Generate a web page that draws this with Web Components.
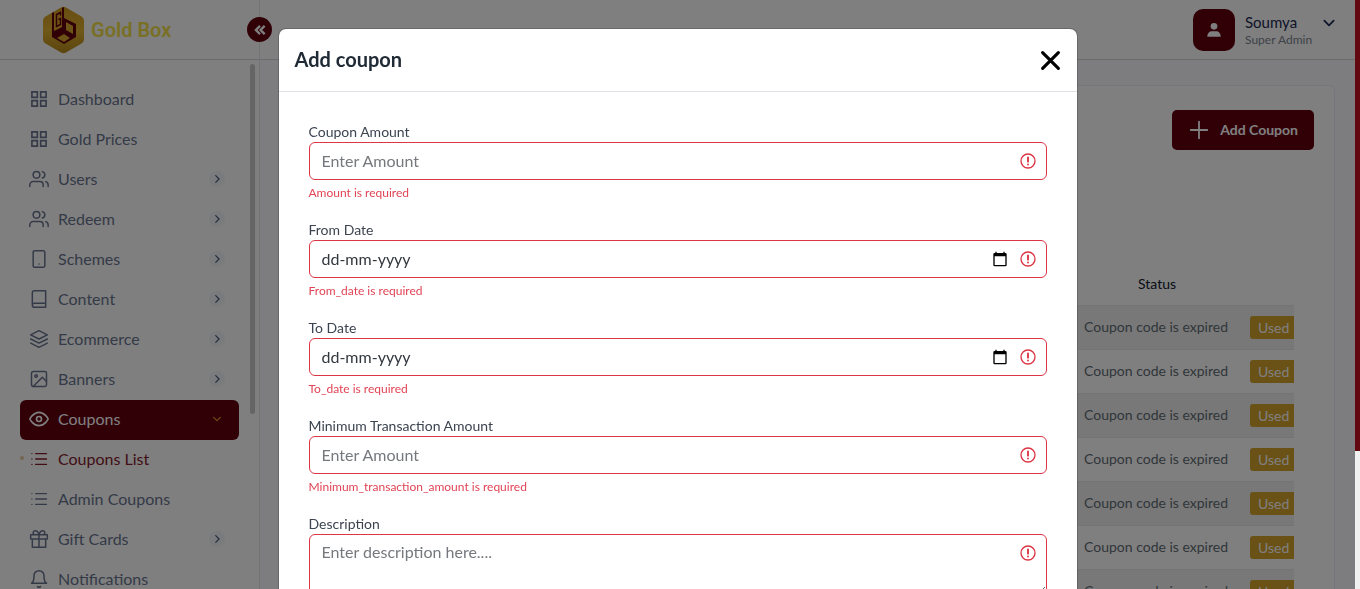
<!DOCTYPE html>
<html lang="en">
<head>
<meta charset="utf-8">
<title>Gold Box</title>
<style>
html, body { margin: 0; height: 100%; overflow: hidden; }
body { font-family: Lato, "Liberation Sans", sans-serif; background: #fafaff; color: #212b36; }
</style>
</head>
<body>
<gb-app>
  <gb-sidebar slot="sidebar">
    <gb-nav-item icon="grid">Dashboard</gb-nav-item>
    <gb-nav-item icon="grid">Gold Prices</gb-nav-item>
    <gb-nav-item icon="users" more>Users</gb-nav-item>
    <gb-nav-item icon="users" more>Redeem</gb-nav-item>
    <gb-nav-item icon="tablet" more>Schemes</gb-nav-item>
    <gb-nav-item icon="book" more>Content</gb-nav-item>
    <gb-nav-item icon="layers" more>Ecommerce</gb-nav-item>
    <gb-nav-item icon="image" more>Banners</gb-nav-item>
    <gb-nav-item icon="eye" more active>Coupons</gb-nav-item>
    <gb-nav-item icon="list" current>Coupons List</gb-nav-item>
    <gb-nav-item icon="list">Admin Coupons</gb-nav-item>
    <gb-nav-item icon="gift" more>Gift Cards</gb-nav-item>
    <gb-nav-item icon="bell">Notifications</gb-nav-item>
  </gb-sidebar>
  <gb-topbar slot="topbar" name="Soumya" role-name="Super Admin"></gb-topbar>
  <gb-coupons></gb-coupons>
</gb-app>
<gb-modal heading="Add coupon">
  <gb-field label="Coupon Amount" hint="Enter Amount" error="Amount is required"></gb-field>
  <gb-field kind="date" label="From Date" hint="dd-mm-yyyy" error="From_date is required"></gb-field>
  <gb-field kind="date" label="To Date" hint="dd-mm-yyyy" error="To_date is required"></gb-field>
  <gb-field label="Minimum Transaction Amount" hint="Enter Amount" error="Minimum_transaction_amount is required"></gb-field>
  <gb-field kind="area" label="Description" hint="Enter description here...."></gb-field>
</gb-modal>

<script>
const icon = (name, size) => `<svg viewBox="0 0 24 24" width="${size}" height="${size}" fill="none" stroke="currentColor" stroke-width="2" stroke-linecap="round" stroke-linejoin="round" aria-hidden="true">${ICONS[name]}</svg>`;

const ICONS = {
  grid: '<path stroke-linejoin="miter" d="M3.500 3.500h6.500v6.500H3.500zM14 3.500h6.500v6.500H14zM14 14h6.500v6.500H14zM3.500 14h6.500v6.500H3.500z"/>',
  users: '<g stroke-width="1.8"><path d="M17 21v-2a4 4 0 0 0-4-4H5a4 4 0 0 0-4 4v2"/><circle cx="9" cy="7" r="4"/><path d="M23 21v-2a4 4 0 0 0-3-3.87M16 3.13a4 4 0 0 1 0 7.75"/></g>',
  tablet: '<g stroke-width="1.8"><rect x="5" y="2" width="14" height="20" rx="2"/><path d="M12 18h.01"/></g>',
  book: '<g stroke-width="1.8"><path d="M4 19.500A2.500 2.500 0 0 1 6.500 17H20M6.500 2H20v20H6.500A2.500 2.500 0 0 1 4 19.500v-15A2.500 2.500 0 0 1 6.500 2z"/></g>',
  layers: '<g stroke-width="1.8"><path d="M12 2 2 7l10 5 10-5-10-5zM2 17l10 5 10-5M2 12l10 5 10-5"/></g>',
  image: '<g stroke-width="1.8"><rect x="3" y="3" width="18" height="18" rx="2"/><circle cx="8.500" cy="8.500" r="1.500"/><path d="m21 15-5-5L5 21"/></g>',
  eye: '<path d="M1 12s4-8 11-8 11 8 11 8-4 8-11 8-11-8-11-8z"/><circle cx="12" cy="12" r="3"/>',
  list: '<path d="M8 5.500h13M8 12h13M8 18.500h13M3.500 5.500h.01M3.500 12h.01M3.500 18.500h.01" stroke-width="1.600"/>',
  gift: '<g stroke-width="1.8"><path d="M20 12v10H4V12M2 7h20v5H2zM12 22V7M12 7H7.500a2.500 2.500 0 0 1 0-5C11 2 12 7 12 7zM12 7h4.500a2.500 2.500 0 0 0 0-5C13 2 12 7 12 7z"/></g>',
  bell: '<g stroke-width="1.8"><path d="M18 8A6 6 0 0 0 6 8c0 7-3 9-3 9h18s-3-2-3-9M13.730 21a2 2 0 0 1-3.460 0"/></g>',
  right: '<path d="m9 4 8 8-8 8" stroke-width="3"/>',
  down: '<path d="m4 8 8 8 8-8" stroke-width="3"/>',
  collapse: '<path d="m12 5-7 7 7 7M20 5l-7 7 7 7" stroke-width="4" stroke-linecap="butt" stroke-linejoin="miter"/>',
  person: '<g fill="currentColor" stroke="none"><circle cx="12" cy="6.500" r="5"/><path d="M2 22c0-5 3-8 7-8h6c4 0 7 3 7 8z"/></g>',
  plus: '<path d="M12 3v18M3 12h18"/>',
  close: '<path d="M3 3l18 18M21 3 3 21" stroke-width="3.600"/>',
  alert: '<circle cx="12" cy="12" r="10.500"/><path d="M12 6.500v6.500M12 17v.3" stroke-width="2.800"/>',
  calendar: '<path fill="currentColor" stroke="none" d="M20 3h-1V1h-2v2H7V1H5v2H4a2 2 0 0 0-2 2v16a2 2 0 0 0 2 2h16a2 2 0 0 0 2-2V5a2 2 0 0 0-2-2zm0 18H4V8h16z"/>'
};

class Base extends HTMLElement {
  connectedCallback() {
    if (this.shadowRoot) return;
    const t = document.createElement('template');
    t.innerHTML = `<style>:host,*{box-sizing:border-box}svg{display:block;flex:none}button{font:inherit;border:0;cursor:pointer}${this.css()}</style>${this.html()}`;
    this.attachShadow({ mode: 'open' }).append(t.content.cloneNode(true));
  }
  at(n) { return this.getAttribute(n) || ''; }
}

customElements.define('gb-app', class extends Base {
  css() { return `
    :host{display:grid;grid-template-columns:260px 1fr;height:100vh;overflow:hidden;padding-right:5px}
    .main{display:flex;flex-direction:column;min-width:0;min-height:0}`; }
  html() { return `<slot name="sidebar"></slot><div class="main"><slot name="topbar"></slot><slot></slot></div>`; }
});

customElements.define('gb-sidebar', class extends Base {
  css() { return `
    :host{display:flex;flex-direction:column;position:relative;min-height:0;background:#fff;border-right:1px solid #e4e6ea}
    .brand{display:flex;align-items:center;gap:7px;flex:none;height:60px;padding-left:43px;border-bottom:1px solid #d4d6da;
      font:600 20px/24px Roboto,sans-serif;color:#f2e04a;text-decoration:none}
    .toggle{position:absolute;top:17px;right:-13px;width:25px;height:25px;padding:0;border-radius:50%;background:#63000f;color:#fff;
      display:grid;place-items:center}
    .body{display:flex;align-items:flex-start;flex:1;min-height:0;overflow:hidden;padding:4px 4px 0 20px}
    nav{flex:1;padding:16px 11px 0 0}
    .thumb{width:5px;height:350px;border-radius:3px;background:#cacaca}`; }
  html() { return `
    <a class="brand" href="#">
      <svg viewBox="0 0 41 48" width="41" height="48" aria-hidden="true">
        <defs><linearGradient id="g" x2="0" y2="1"><stop stop-color="#d09a20"/><stop offset=".5" stop-color="#e0b030"/><stop offset="1" stop-color="#b88a1c"/></linearGradient></defs>
        <path fill="url(#g)" d="M18 1.500q2.500-1.500 5 0l15.500 9q2.500 1.500 2.500 4v19q0 2.500-2.500 4l-15.500 9q-2.500 1.500-5 0l-15.500-9Q0 36 0 33.500v-19q0-2.500 2.500-4z"/>
        <path fill="#63000f" d="M9 7l2-1v19l8-4V2l2-1v11l12 6v13l-12 7-12-7z"/>
        <path fill="#d8a82c" d="m23 16 7 4v8l-7-4zM21 28l6 4-6 4-7-4z"/>
        <path fill="none" stroke="#63000f" stroke-width="1.500" d="M17.500 9.500V6.500l-4 2v12l4-2v-6l-2 1"/>
      </svg>
      <span>Gold Box</span>
    </a>
    <button class="toggle" aria-label="Collapse menu">${icon('collapse', 14)}</button>
    <div class="body"><nav><slot></slot></nav><div class="thumb"></div></div>`; }
});

customElements.define('gb-nav-item', class extends Base {
  css() { return `
    :host{display:block}
    a{position:relative;display:flex;align-items:center;gap:9px;height:40px;padding:0 14px 2px 9px;border-radius:6px;
      font-size:16px;line-height:24px;color:#69758f;text-decoration:none}
    .label{flex:1}
    .more{display:grid;place-items:center;width:16px;height:16px;border-radius:50%;background:#f5f7fa;color:#4c5a78}
    :host([active]) a{background:#63000f;color:#fff}
    :host([active]) .more{background:none;color:#d6942c}
    :host([current]) a{color:#841c2c}
    :host([current]) a::before{content:"";position:absolute;left:0;top:16px;width:4px;height:4px;border-radius:50%;background:#ecc8a4}`; }
  html() {
    const more = this.hasAttribute('more') ? `<span class="more">${icon(this.hasAttribute('active') ? 'down' : 'right', 10)}</span>` : '';
    return `<a href="#">${icon(this.at('icon'), 20)}<span class="label"><slot></slot></span>${more}</a>`;
  }
});

customElements.define('gb-topbar', class extends Base {
  css() { return `
    :host{display:flex;justify-content:flex-end;flex:none;height:60px;padding:0 19px;background:#fff;border-bottom:1px solid #d4d6da}
    button{display:flex;align-items:center;padding:0;background:none;text-align:left}
    .avatar{display:grid;place-items:center;width:42px;height:42px;border-radius:10px;background:#63000f;color:#fff}
    .who{display:flex;flex-direction:column;width:71px;margin:0 6px 0 10px;white-space:nowrap}
    b{font-weight:normal;font-size:15px;line-height:20px;color:#1c2a55}
    small{font-size:12px;line-height:16px;color:#7b8590}
    .caret{align-self:flex-start;padding-top:16px;color:#1c2a55}`; }
  html() { return `<button>
    <span class="avatar">${icon('person', 16)}</span>
    <span class="who"><b>${this.at('name')}</b><small>${this.at('role-name')}</small></span>
    <span class="caret">${icon('down', 14)}</span></button>`; }
});

customElements.define('gb-coupons', class extends Base {
  css() { return `
    :host{display:block;flex:1;min-height:0;overflow:hidden;padding:25px 20px 0}
    .card{background:#fff;border:1px solid #eceef4;border-radius:6px;padding:24px 20px 40px}
    .bar{display:flex;justify-content:flex-end}
    .add{display:flex;align-items:center;gap:10px;height:40px;padding:0 16px;border-radius:5px;background:#63000f;color:#fff;font-weight:bold;font-size:14px;line-height:20px}
    .scroll{margin:115px 20px 0;overflow:hidden}
    table{table-layout:fixed;width:calc(100% + 20px);border-collapse:collapse;font-size:14px;line-height:20px}
    .status{width:166px}.used{width:74px}
    th{height:40px;padding:0 0 2px;font-weight:normal;text-align:center;color:#10182c}
    td{height:44px;padding:0 10px;border-top:1px solid #e6e8ea;color:#626c74;white-space:nowrap}
    tbody tr:nth-child(odd){background:#f1f1f1}
    .tag{display:inline-block;width:52px;height:23px;border-radius:3px;padding-left:8px;background:#d4a32c;color:#fff;line-height:23px}`; }
  html() { return `<div class="card">
    <div class="bar"><button class="add">${icon('plus', 22)}<span>Add Coupon</span></button></div>
    <div class="scroll"><table>
      <colgroup><col><col class="status"><col class="used"></colgroup>
      <thead><tr><th></th><th>Status</th><th></th></tr></thead>
      <tbody>${'<tr><td></td><td>Coupon code is expired</td><td><span class="tag">Used</span></td></tr>'.repeat(7)}</tbody>
    </table></div></div>`; }
});

customElements.define('gb-modal', class extends Base {
  css() { return `
    :host{position:fixed;inset:0;display:flex;overflow:hidden}
    .veil{flex:1;background:rgba(0,0,0,.5);padding:28px 16px}
    .dialog{max-width:800px;margin:0 auto;background:#fff;background-clip:padding-box;border:1px solid rgba(0,0,0,.18);border-radius:8px}
    header{display:flex;align-items:center;justify-content:space-between;height:63px;padding:0 16px;border-bottom:1px solid #dee2e6}
    h2{margin:0;padding-bottom:2px;font-size:20px;line-height:30px;color:#212b36}
    header button{padding:0;background:none;color:#000}
    form{display:flex;flex-direction:column;gap:16px;padding:30px}
    .track{width:5px;background:#f1f1f1}
    .thumb{height:451px;background:#630711}`; }
  html() { return `<div class="veil"><section class="dialog" role="dialog" aria-label="${this.at('heading')}">
    <header><h2>${this.at('heading')}</h2><button aria-label="Close">${icon('close', 21)}</button></header>
    <form><slot></slot></form></section></div>
    <div class="track"><div class="thumb"></div></div>`; }
});

customElements.define('gb-field', class extends Base {
  css() { return `
    :host{display:block}
    label{display:block;font-size:14px;line-height:20px;color:#3c4450}
    .box{position:relative}
    input,textarea{display:block;width:100%;margin:0;padding:5px 40px 7px 12px;border:1px solid #dc3545;border-radius:6px;background:#fff;
      font:inherit;font-size:16px;line-height:24px;color:#212529;outline:0}
    input{height:38px}
    ::placeholder{color:#75797d;opacity:1}
    .date::placeholder{color:#32383e}
    .marks{position:absolute;top:11px;right:11px;display:flex;gap:12px;color:#dc3545}
    .marks button{padding:0;background:none;color:#000}
    p{margin:3px 0 0;font-size:12px;line-height:20px;color:#e04455}
    p::after{content:"";display:block;height:1px}`; }
  html() {
    const kind = this.at('kind'), hint = `placeholder="${this.at('hint')}"`;
    const control = kind === 'area' ? `<textarea id="f" rows="2" ${hint}></textarea>` : `<input id="f" type="text" class="${kind}" ${hint}>`;
    const cal = kind === 'date' ? `<button type="button" aria-label="Open calendar">${icon('calendar', 16)}</button>` : '';
    const err = this.at('error') ? `<p>${this.at('error')}</p>` : '';
    return `<label for="f">${this.at('label')}</label><div class="box">${control}<span class="marks">${cal}${icon('alert', 16)}</span></div>${err}`;
  }
});
</script>
</body>
</html>
